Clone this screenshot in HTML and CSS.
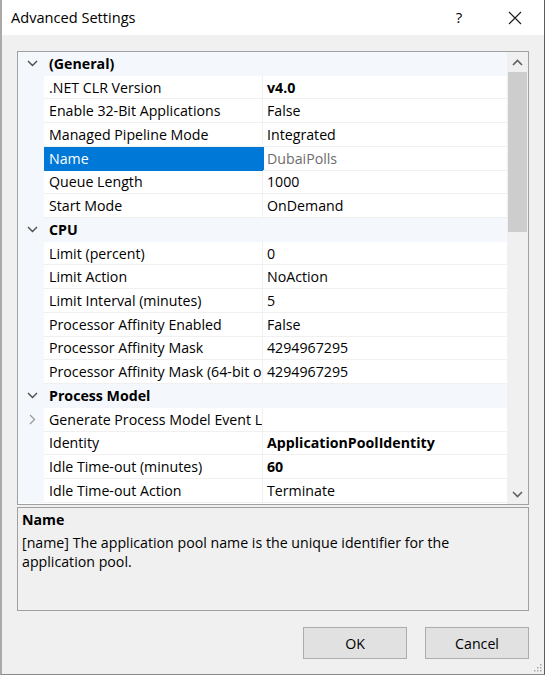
FILE: index.html
```html
<!DOCTYPE html>
<html>
<head>
<meta charset="utf-8">
<title>Advanced Settings</title>
<link rel="stylesheet" href="styles.css">
</head>
<body>
<div class="window">
  <div class="titlebar">
    <div class="title">Advanced Settings</div>
    <div class="tb-btn help">?</div>
    <div class="tb-btn close">
      <svg width="14" height="14" viewBox="0 0 14 14"><path d="M1 1L13 13M13 1L1 13" stroke="#1a1a1a" stroke-width="1.1" fill="none"/></svg>
    </div>
  </div>
  <div class="content">
    <div class="grid">
      <div class="rows">
        <div class="row cat"><div class="gut"><svg class="chev" width="11" height="7" viewBox="0 0 11 7"><path d="M1 1L5.5 5.5L10 1" stroke="#4a4a4a" stroke-width="1.4" fill="none"/></svg></div><div class="cat-name">(General)</div></div>
        <div class="row"><div class="gut"></div><div class="name">.NET CLR Version</div><div class="val b">v4.0</div></div>
        <div class="row"><div class="gut"></div><div class="name">Enable 32-Bit Applications</div><div class="val">False</div></div>
        <div class="row"><div class="gut"></div><div class="name">Managed Pipeline Mode</div><div class="val">Integrated</div></div>
        <div class="row sel"><div class="gut"></div><div class="name">Name</div><div class="val ro">DubaiPolls</div></div>
        <div class="row"><div class="gut"></div><div class="name">Queue Length</div><div class="val">1000</div></div>
        <div class="row"><div class="gut"></div><div class="name">Start Mode</div><div class="val">OnDemand</div></div>
        <div class="row cat"><div class="gut"><svg class="chev" width="11" height="7" viewBox="0 0 11 7"><path d="M1 1L5.5 5.5L10 1" stroke="#4a4a4a" stroke-width="1.4" fill="none"/></svg></div><div class="cat-name">CPU</div></div>
        <div class="row"><div class="gut"></div><div class="name">Limit (percent)</div><div class="val">0</div></div>
        <div class="row"><div class="gut"></div><div class="name">Limit Action</div><div class="val">NoAction</div></div>
        <div class="row"><div class="gut"></div><div class="name">Limit Interval (minutes)</div><div class="val">5</div></div>
        <div class="row"><div class="gut"></div><div class="name">Processor Affinity Enabled</div><div class="val">False</div></div>
        <div class="row"><div class="gut"></div><div class="name">Processor Affinity Mask</div><div class="val">4294967295</div></div>
        <div class="row"><div class="gut"></div><div class="name"><span class="clip">Processor Affinity Mask (64-bit option)</span></div><div class="val">4294967295</div></div>
        <div class="row cat"><div class="gut"><svg class="chev" width="11" height="7" viewBox="0 0 11 7"><path d="M1 1L5.5 5.5L10 1" stroke="#4a4a4a" stroke-width="1.4" fill="none"/></svg></div><div class="cat-name">Process Model</div></div>
        <div class="row"><div class="gut"><svg class="chev" width="7" height="11" viewBox="0 0 7 11"><path d="M1 1L5.5 5.5L1 10" stroke="#9a9a9a" stroke-width="1.3" fill="none"/></svg></div><div class="name"><span class="clip">Generate Process Model Event Log Entry</span></div><div class="val"></div></div>
        <div class="row"><div class="gut"></div><div class="name">Identity</div><div class="val b">ApplicationPoolIdentity</div></div>
        <div class="row"><div class="gut"></div><div class="name">Idle Time-out (minutes)</div><div class="val b">60</div></div>
        <div class="row"><div class="gut"></div><div class="name">Idle Time-out Action</div><div class="val">Terminate</div></div>
      </div>
      <div class="scrollbar">
        <div class="sb-arrow"><svg width="11" height="7" viewBox="0 0 11 7"><path d="M1 6L5.5 1.5L10 6" stroke="#606060" stroke-width="1.6" fill="none"/></svg></div>
        <div class="sb-track">
          <div class="sb-thumb"></div>
        </div>
        <div class="sb-arrow"><svg width="11" height="7" viewBox="0 0 11 7"><path d="M1 1L5.5 5.5L10 1" stroke="#606060" stroke-width="1.6" fill="none"/></svg></div>
      </div>
    </div>
    <div class="desc">
      <div class="desc-title">Name</div>
      <div class="desc-text">[name] The application pool name is the unique identifier for the application pool.</div>
    </div>
    <div class="buttons">
      <div class="btn">OK</div>
      <div class="btn">Cancel</div>
    </div>
    <div class="grip">
      <svg width="9" height="9" viewBox="0 0 9 9" fill="#a8a8a8"><rect x="7" y="1" width="1.5" height="1.5"/><rect x="4" y="4" width="1.5" height="1.5"/><rect x="7" y="4" width="1.5" height="1.5"/><rect x="1" y="7" width="1.5" height="1.5"/><rect x="4" y="7" width="1.5" height="1.5"/><rect x="7" y="7" width="1.5" height="1.5"/></svg>
    </div>
  </div>
</div>
</body>
</html>
```
FILE: styles.css
```css
* { box-sizing: border-box; }
html, body { margin: 0; padding: 0; }
body {
  background: #ffffff;
  font-family: "Open Sans", "Noto Sans", sans-serif;
  font-size: 14.2px;
  color: #000;
  width: 550px;
  height: 676px;
  overflow: hidden;
}
.window {
  width: 545px;
  height: 675px;
  background: #f0f0f0;
  border-left: 2px solid #a9a9a9;
  border-right: 1px solid #5c5c5c;
  border-bottom: 1px solid #8a8a8a;
  display: flex;
  flex-direction: column;
}
.titlebar {
  height: 35px;
  background: #fff;
  display: flex;
  align-items: center;
  flex: none;
}
.title {
  font-size: 14.6px;
  padding-left: 9px;
  padding-bottom: 2px;
  flex: 1;
  color: #000;
}
.tb-btn {
  width: 40px;
  display: flex;
  justify-content: center;
  align-items: center;
}
.help { font-size: 15px; margin-right: 16px; padding-bottom: 2px; }
.close { margin-right: 9px; }
.content {
  flex: 1;
  padding: 16px 15px 0 15px;
  display: flex;
  flex-direction: column;
  position: relative;
}
.grid {
  height: 454px;
  border: 1px solid #a0a0a0;
  background: #fff;
  display: flex;
  flex: none;
}
.rows {
  flex: 1;
  overflow: hidden;
}
.row {
  height: 23.72px;
  display: grid;
  grid-template-columns: 26px 219px 1fr;
  align-items: stretch;
  white-space: nowrap;
}
.gut {
  background: #f4f7fb;
  display: flex;
  align-items: center;
  justify-content: center;
  padding-left: 2px;
}
.name, .val {
  border-bottom: 1px solid #f0f0f0;
  display: flex;
  align-items: center;
  overflow: hidden;
  min-width: 0;
}
.name {
  padding-left: 5px;
  border-right: 1px solid #f0f0f0;
}
.clip {
  display: block;
  overflow: hidden;
  white-space: nowrap;
  width: 100%;
}
.val { padding-left: 4px; }
.b { font-weight: bold; }
.ro { color: #6d6d6d; }
.sel .name {
  background: #0078d7;
  color: #fff;
  border-bottom-color: #0078d7;
  border-right-color: #0078d7;
}
.sel .val { box-shadow: inset 1px 0 0 #0078d7; }
.row.cat {
  background: #f4f7fb;
  grid-template-columns: 26px 1fr;
}
.cat-name {
  font-weight: bold;
  padding-left: 5px;
  display: flex;
  align-items: center;
}
.scrollbar {
  width: 21px;
  background: #f0f0f0;
  display: flex;
  flex-direction: column;
  flex: none;
}
.sb-arrow {
  height: 20px;
  display: flex;
  align-items: center;
  justify-content: center;
  flex: none;
}
.sb-track {
  flex: 1;
  padding: 0 1px;
}
.sb-thumb {
  height: 160px;
  background: #cdcdcd;
}
.desc {
  margin-top: 2px;
  height: 104px;
  border: 1px solid #a0a0a0;
  padding: 2px 4px;
  flex: none;
}
.desc-title {
  font-weight: bold;
  line-height: 20px;
}
.desc-text {
  line-height: 19px;
  margin-top: 3px;
  width: 470px;
}
.buttons {
  margin-top: 16px;
  display: flex;
  justify-content: flex-end;
  gap: 18px;
  padding-right: 0;
}
.btn {
  width: 104px;
  height: 32px;
  background: #e1e1e1;
  border: 1px solid #adadad;
  display: flex;
  align-items: center;
  justify-content: center;
}
.grip {
  position: absolute;
  right: 2px;
  bottom: 2px;
  line-height: 0;
}
```
